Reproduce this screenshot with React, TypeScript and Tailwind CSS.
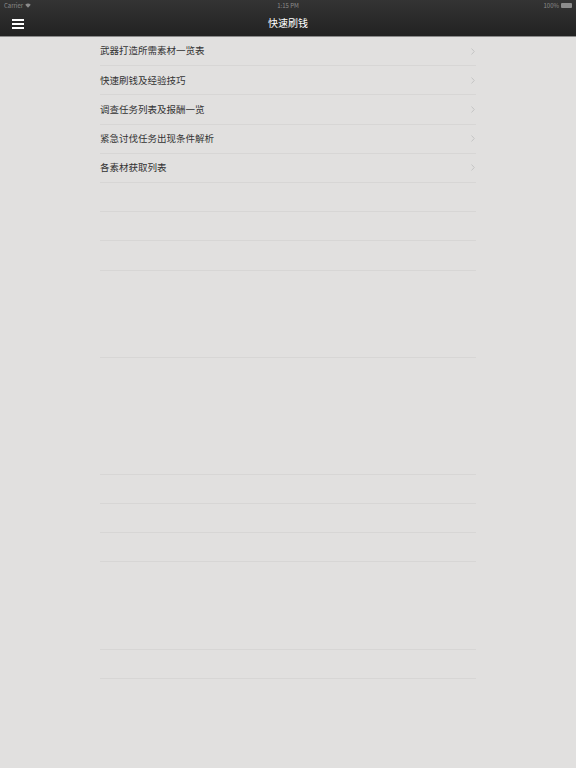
import React from 'react';

const items = [
  '武器打造所需素材一览表',
  '快速刷钱及经验技巧',
  '调查任务列表及报酬一览',
  '紧急讨伐任务出现条件解析',
  '各素材获取列表',
];

// rows after which a separator is visible in the screenshot
const lined = new Set([0, 1, 2, 3, 4, 5, 6, 7, 10, 14, 15, 16, 17, 20, 21]);

export default function App() {
  const font = { fontFamily: '"Noto Sans CJK SC", "Liberation Sans", sans-serif' };
  return (
    <div className="w-[576px] h-[768px] bg-[#e1e0df] flex flex-col overflow-hidden" style={font}>
      {/* Top bar */}
      <header className="h-[37px] bg-gradient-to-b from-[#343434] to-[#222222] border-b border-[#8a8a8a] flex flex-col">
        <div className="h-[11px] px-1 flex items-center justify-between text-[6px] leading-none text-[#8c8c8c]">
          <div className="flex items-center gap-[2px] w-16">
            <span>Carrier</span>
            <svg width="6" height="5" viewBox="0 0 12 9">
              <path d="M6 9 L0.5 3 A8 8 0 0 1 11.5 3 Z" fill="#8c8c8c" />
            </svg>
          </div>
          <span>1:15 PM</span>
          <div className="flex items-center justify-end gap-[2px] w-16">
            <span>100%</span>
            <div className="w-[11px] h-[5px] bg-[#8c8c8c] rounded-[1px]" />
          </div>
        </div>
        <div className="flex-1 relative flex items-center justify-center">
          <div className="absolute left-[12px] top-[8px] flex flex-col gap-[2px]">
            <div className="w-[12px] h-[2px] bg-white" />
            <div className="w-[12px] h-[2px] bg-white" />
            <div className="w-[12px] h-[2px] bg-white" />
          </div>
          <span className="text-[10px] text-white -mt-[2px]">快速刷钱</span>
        </div>
      </header>

      {/* List */}
      <div className="flex-1 flex justify-center">
        <div className="w-[376px] flex flex-col">
          {Array.from({ length: 22 }).map((_, i) => (
            <div
              key={i}
              className={`h-[29.2px] shrink-0 flex items-center justify-between border-b ${
                lined.has(i) ? 'border-[#d7d6d5]' : 'border-transparent'
              }`}
            >
              <span className="text-[9.5px] text-[#333333] leading-none">{items[i] ?? ''}</span>
              {items[i] && (
                <svg width="4" height="7" viewBox="0 0 4 7" className="mr-[1px]">
                  <path d="M0.5 0.5 L3.3 3.5 L0.5 6.5" fill="none" stroke="#c2c2c2" strokeWidth="0.9" />
                </svg>
              )}
            </div>
          ))}
        </div>
      </div>
    </div>
  );
}
